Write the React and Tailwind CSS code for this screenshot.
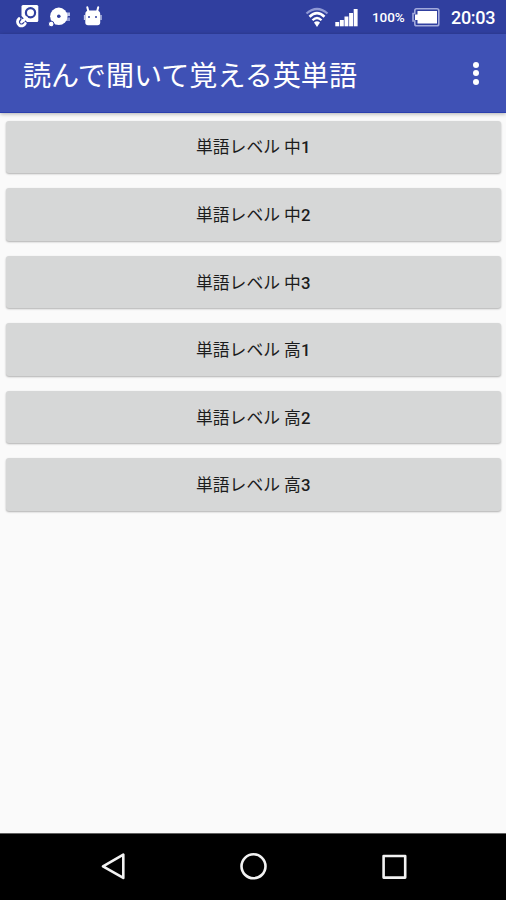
const levels = ['中1', '中2', '中3', '高1', '高2', '高3']

function StatusBar() {
  return (
    <div className="h-[34px] shrink-0 bg-[#303f9f] flex items-center pl-[14px] pr-[11px]">
      {/* notifications */}
      <svg className="w-[26px] h-[34px]" viewBox="0 0 26 34" fill="none">
        <rect x="7.5" y="5" width="16.8" height="17" rx="1.5" fill="#fff" />
        <circle cx="16.5" cy="12.7" r="4.6" stroke="#303f9f" strokeWidth="2.2" />
        <path d="M7 16.5 L12.5 22.5" stroke="#303f9f" strokeWidth="1.5" />
        <path d="M5 18.6 A4.1 4.1 0 1 0 11.3 23.5 M7.5 22 L12.5 17.8" stroke="#fff" strokeWidth="2.8" strokeLinecap="round" />
      </svg>
      <svg className="w-[26px] h-[34px] ml-[7px]" viewBox="0 0 26 34" fill="none">
        <rect x="18" y="12.5" width="5" height="3.5" fill="#b9c0e8" />
        <rect x="18.5" y="17.5" width="4.5" height="3.5" fill="#8f99d4" />
        <circle cx="11.8" cy="16.3" r="8.7" fill="#fff" />
        <circle cx="11.8" cy="16.3" r="1.8" fill="#303f9f" />
        <circle cx="4.2" cy="24" r="2.8" fill="#fff" stroke="#303f9f" />
      </svg>
      <svg className="w-[20px] h-[34px] ml-[10px]" viewBox="0 0 20 34" fill="none">
        <path d="M5.5 12 L4.3 7.3 M14 12 L15.2 7.3" stroke="#fff" strokeWidth="2" strokeLinecap="round" />
        <path d="M2.3 14 Q2.3 10.5 6 10.5 H13.5 Q17.2 10.5 17.2 14 V22.5 Q17.2 25.2 14.5 25.2 H5 Q2.3 25.2 2.3 22.5 Z" fill="#fff" />
        <path d="M1.5 15 V20 M18 15 V20" stroke="#c9ceec" strokeWidth="1.3" />
        <circle cx="6" cy="17" r="1" fill="#303f9f" />
        <circle cx="13" cy="17" r="1" fill="#303f9f" />
      </svg>

      <div className="ml-auto flex items-center">
        <svg className="w-[24px] h-[34px]" viewBox="0 0 24 34" fill="none" strokeLinecap="butt">
          <path d="M1.5 13.5 Q12 4.5 22.5 13.5" stroke="#8f99d4" strokeWidth="2.3" />
          <path d="M4.5 16.8 Q12 9.5 19.5 16.8" stroke="#fff" strokeWidth="2.6" />
          <path d="M7.5 20.2 Q12 15.8 16.5 20.2" stroke="#fff" strokeWidth="2.3" />
          <path d="M9 22.5 Q12 20 15 22.5 L12 27 Z" fill="#fff" />
        </svg>
        <svg className="w-[23px] h-[34px] ml-[6px]" viewBox="0 0 23 34" fill="#fff">
          <rect x="0.3" y="22" width="3.9" height="4.3" />
          <rect x="4.9" y="20" width="3.9" height="6.3" />
          <rect x="9.5" y="16.5" width="3.9" height="9.8" />
          <rect x="14.1" y="13" width="3.9" height="13.3" />
          <rect x="18.7" y="9" width="3.9" height="17.3" />
        </svg>
        <span className="w-[33px] ml-[14px] mt-[2px] text-[13.5px] leading-none font-medium tracking-[-0.1px] text-white">100%</span>
        <svg className="w-[28px] h-[34px] ml-[7px]" viewBox="0 0 28 34" fill="none">
          <path d="M4.5 8.7 H25 Q26.8 8.7 26.8 10.5 V24 Q26.8 25.8 25 25.8 H4.5 Q2.8 25.8 2.8 24 V21 H1 V13.5 H2.8 V10.5 Q2.8 8.7 4.5 8.7 Z" stroke="#a3abdc" strokeWidth="1.6" />
          <path d="M5.5 11 H25 V23.5 H5.5 V20 H3 V14.5 H5.5 Z" fill="#fff" />
        </svg>
        <span className="w-[44px] ml-[11px] mt-[1px] text-[18px] leading-none font-medium tracking-[-0.3px] text-white">20:03</span>
      </div>
    </div>
  )
}

function AppBar({ title }) {
  return (
    <header className="relative z-10 h-[79px] shrink-0 bg-[#3f51b5] border-b border-[#2b3fae] flex items-center justify-between pl-[23px] pr-[27px] shadow-[0_1px_4px_rgba(0,0,0,0.3)]">
      <h1 className="pt-[8px] text-[28.1px] leading-none whitespace-nowrap text-white">{title}</h1>
      <button className="flex flex-col gap-[2.5px]" aria-label="menu">
        <span className="w-[6px] h-[6px] rounded-full bg-white"></span>
        <span className="w-[6px] h-[6px] rounded-full bg-white"></span>
        <span className="w-[6px] h-[6px] rounded-full bg-white"></span>
      </button>
    </header>
  )
}

function NavBar() {
  return (
    <nav className="h-[67px] shrink-0 bg-black border-t border-[#606060] flex items-center justify-between pl-[100px] pr-[98px]">
      <svg className="w-[28px] h-[28px]" viewBox="0 0 28 28" fill="none" stroke="#f2f2f2" strokeWidth="2.6" strokeLinejoin="round">
        <path d="M3 13.3 L23.3 1.7 V24.9 Z" />
      </svg>
      <svg className="w-[28px] h-[28px]" viewBox="0 0 28 28" fill="none" stroke="#f2f2f2" strokeWidth="2.6">
        <circle cx="13.5" cy="13.3" r="12" />
      </svg>
      <svg className="w-[28px] h-[28px]" viewBox="0 0 28 28" fill="none" stroke="#f2f2f2" strokeWidth="2.6" strokeLinejoin="round">
        <rect x="3.6" y="3" width="21.6" height="21.6" />
      </svg>
    </nav>
  )
}

export default function App() {
  return (
    <div className="w-[506px] h-[900px] flex flex-col overflow-hidden bg-[#fafafa] font-[Roboto,'Noto_Sans_CJK_JP',sans-serif]">
      <StatusBar />
      <AppBar title="読んで聞いて覚える英単語" />
      <main className="flex-1 flex flex-col gap-[15.1px] pt-[7.5px] pl-[5.5px] pr-[5px]">
        {levels.map((level) => (
          <button
            key={level}
            className="h-[52.5px] shrink-0 rounded-[3px] bg-[#d6d7d7] pt-[2px] text-[16.8px] leading-none text-[#1c1c1c] shadow-[0_1px_2px_rgba(0,0,0,0.3)]"
          >
            単語レベル {level[0]}<span className="font-medium">{level[1]}</span>
          </button>
        ))}
      </main>
      <NavBar />
    </div>
  )
}
